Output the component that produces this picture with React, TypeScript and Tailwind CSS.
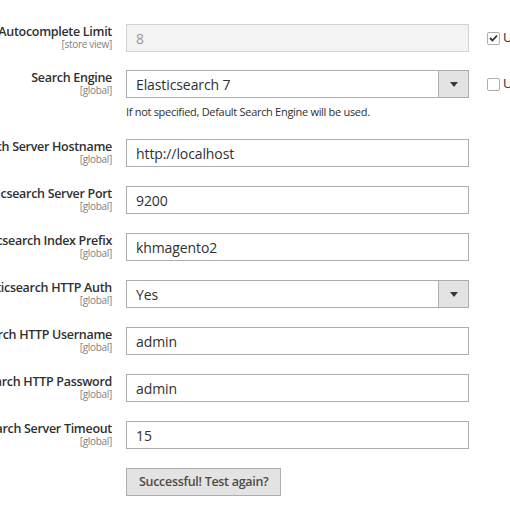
import React from 'react';

type Row = {
  label: string;
  scope: string;
  value: string;
  kind?: 'input' | 'select' | 'disabled';
  note?: string;
  check?: boolean;
};

const rows: Row[] = [
  { label: 'Autocomplete Limit', scope: '[store view]', value: '8', kind: 'disabled', check: true },
  {
    label: 'Search Engine',
    scope: '[global]',
    value: 'Elasticsearch 7',
    kind: 'select',
    note: 'If not specified, Default Search Engine will be used.',
    check: false,
  },
  { label: 'Elasticsearch Server Hostname', scope: '[global]', value: 'http://localhost' },
  { label: 'Elasticsearch Server Port', scope: '[global]', value: '9200' },
  { label: 'Elasticsearch Index Prefix', scope: '[global]', value: 'khmagento2' },
  { label: 'Elasticsearch HTTP Auth', scope: '[global]', value: 'Yes', kind: 'select' },
  { label: 'Elasticsearch HTTP Username', scope: '[global]', value: 'admin' },
  { label: 'Elasticsearch HTTP Password', scope: '[global]', value: 'admin' },
  { label: 'Elasticsearch Server Timeout', scope: '[global]', value: '15' },
];

const Field: React.FC<{ row: Row }> = ({ row }) => {
  if (row.kind === 'select') {
    return (
      <div className="flex h-[28px] w-full border border-[#adadad] bg-white">
        <div className="flex flex-1 items-center pl-[9px] text-[14px] tracking-[-0.1px] text-[#303030]">{row.value}</div>
        <div className="flex w-[30px] items-center justify-center border-l border-[#adadad] bg-[#e3e3e3]">
          <svg width="8" height="5" viewBox="0 0 8 5">
            <path d="M0 0 H8 L4 5 Z" fill="#41362f" />
          </svg>
        </div>
      </div>
    );
  }
  if (row.kind === 'disabled') {
    return (
      <div className="flex h-[28px] w-full items-center border border-[#d3d3d3] bg-[#f3f3f3] pl-[9px] text-[14px] text-[#999999]">
        {row.value}
      </div>
    );
  }
  return (
    <div className="flex h-[28px] w-full items-center border border-[#adadad] bg-white pl-[9px] text-[14px] tracking-[-0.1px] text-[#303030]">
      {row.value}
    </div>
  );
};

const App: React.FC = () => {
  return (
    <div
      className="h-[510px] w-[510px] overflow-hidden bg-white pt-[24px]"
      style={{ fontFamily: '"Open Sans", "Noto Sans", sans-serif' }}
    >
      {rows.map((row, i) => (
        <div key={row.label} className={`flex items-start ${i === 0 ? 'mb-[18px]' : 'mb-[19px]'}`}>
          <div className="flex w-[112px] shrink-0 flex-col items-end whitespace-nowrap text-right">
            <span className="pt-[1px] text-[12.5px] font-semibold leading-[14px] tracking-[-0.3px] text-[#303030]">
              {row.label}
            </span>
            <span className="text-[10px] leading-[10px] tracking-[-0.3px] text-[#808080]">{row.scope}</span>
          </div>
          <div className="ml-[14px] w-[343px] shrink-0">
            <Field row={row} />
            {row.note && (
              <div className="mt-[5px] text-[11px] leading-[17px] tracking-[-0.3px] text-[#303030]">{row.note}</div>
            )}
          </div>
          {row.check !== undefined && (
            <div className="ml-[18px] flex h-[28px] shrink-0 items-center gap-[3px] whitespace-nowrap text-[13px] text-[#303030]">
              <span className="flex h-[13px] w-[13px] items-center justify-center rounded-[2px] border border-[#adadad] bg-white">
                {row.check && (
                  <svg width="9" height="8" viewBox="0 0 9 8">
                    <path d="M1 4 L3.5 6.5 L8 1.5" stroke="#303030" strokeWidth="1.8" fill="none" />
                  </svg>
                )}
              </span>
              <span>Use system value</span>
            </div>
          )}
        </div>
      ))}
      <div className="ml-[126px] flex">
        <button className="h-[28px] border border-[#adadad] bg-[#e3e3e3] px-[12px] text-[12.5px] font-semibold tracking-[-0.3px] text-[#514943]">
          Successful! Test again?
        </button>
      </div>
    </div>
  );
};

export default App;
